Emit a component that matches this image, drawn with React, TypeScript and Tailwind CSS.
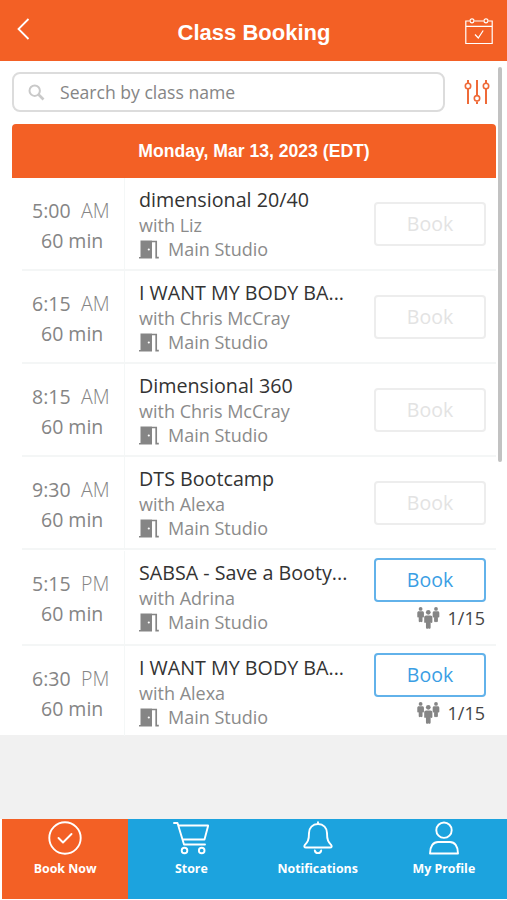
import clsx from "clsx";

interface ClassItem {
	id: number;
	time: string;
	period: "AM" | "PM";
	name: string;
	instructor: string;
	spots?: string;
	rowClass: string;
}

const classes: ClassItem[] = [
	{ id: 1, time: "5:00", period: "AM", name: "dimensional 20/40", instructor: "Liz", rowClass: "h-[93px]" },
	{ id: 2, time: "6:15", period: "AM", name: "I WANT MY BODY BA...", instructor: "Chris McCray", rowClass: "h-[93px]" },
	{ id: 3, time: "8:15", period: "AM", name: "Dimensional 360", instructor: "Chris McCray", rowClass: "h-[93px]" },
	{ id: 4, time: "9:30", period: "AM", name: "DTS Bootcamp", instructor: "Alexa", rowClass: "h-[93px]" },
	{ id: 5, time: "5:15", period: "PM", name: "SABSA - Save a Booty...", instructor: "Adrina", spots: "1/15", rowClass: "h-[96px] pt-px" },
	{ id: 6, time: "6:30", period: "PM", name: "I WANT MY BODY BA...", instructor: "Alexa", spots: "1/15", rowClass: "h-[90px]" },
];

function DoorIcon() {
	return (
		<svg width="20" height="19" viewBox="0 0 20 19" className="shrink-0">
			<path fillRule="evenodd" fill="#858585" d="M1.5 .5H13V18.5H0V17H1.5ZM9.8 8.4a1.1 1.1 0 1 0 0 2.2a1.1 1.1 0 1 0 0-2.2Z" />
			<path fill="none" stroke="#858585" strokeWidth="1.7" d="M13 1.5H17.2V17.6H19.8" />
		</svg>
	);
}

function Person({ x, y }: { x: number; y: number }) {
	return (
		<g transform={`translate(${x} ${y})`}>
			<circle cx="3.5" cy="2" r="2" />
			<path d="M1.8 4.6H5.2C6.4 4.6 7 5.3 7 6.3V10.2C7 11.2 5.7 11.2 5.5 10.4V14.8C5.5 16 4.2 16.3 3.5 15.4C2.8 16.3 1.5 16 1.5 14.8V10.4C1.3 11.2 0 11.2 0 10.2V6.3C0 5.3 .6 4.6 1.8 4.6Z" />
		</g>
	);
}

function PeopleIcon() {
	return (
		<svg width="23" height="22" viewBox="0 0 23 22" fill="#858585">
			<g transform="scale(.95)">
				<Person x={0.3} y={0} />
				<Person x={16.5} y={0} />
			</g>
			<g transform="translate(7.2 3) scale(1.17 1.18)">
				<Person x={0} y={0} />
			</g>
		</svg>
	);
}

function ClassRow({ item }: { item: ClassItem }) {
	return (
		<div className={clsx("ml-[22px] mr-[11px] flex border-b-2 border-[#f4f6f6] last:border-b-0", item.rowClass)}>
			<div className="w-[103px] shrink-0 border-r border-[#f4f7f7] pt-[18px] text-[19.5px] leading-[30px] text-[#858585]">
				<div className="flex pl-[10px]">
					<span className="w-[49px]">{item.time}</span>
					<span className="font-light">{item.period}</span>
				</div>
				<div className="pl-[19px]">60 min</div>
			</div>
			<div className="min-w-0 flex-1 whitespace-nowrap pl-[14px] pt-[9px] text-[#8b8b8b]">
				<h3 className="text-[19.7px] leading-[26px] text-[#333]">{item.name}</h3>
				<p className="text-[18px] leading-[24px]">with {item.instructor}</p>
				<div className="flex items-center text-[18px] leading-[24px]">
					<DoorIcon />
					<span className="pl-[9px]">Main Studio</span>
				</div>
			</div>
			<div className={clsx("mr-[10px] flex w-[112px] shrink-0 flex-col items-end", item.spots ? "pt-[7px]" : "pt-[24px]")}>
				<button
					disabled={!item.spots}
					className={clsx(
						"h-[44px] w-full rounded-[4px] border-2 text-[19.5px] leading-none",
						item.spots ? "border-[#62b2ea] text-[#3a9ee4]" : "border-[#ededed] text-[#e3e3e3]"
					)}
				>
					Book
				</button>
				{item.spots && (
					<div className="flex items-center gap-[8px] pr-px pt-[4px] text-[18px] leading-[24px] text-[#444]">
						<PeopleIcon />
						<span>{item.spots}</span>
					</div>
				)}
			</div>
		</div>
	);
}

const tabs = [
	{
		label: "Book Now",
		active: true,
		icon: (
			<>
				<circle cx="18" cy="18" r="15.7" />
				<path d="M11.5 18L16 22.5L24.5 14" />
			</>
		),
	},
	{
		label: "Store",
		icon: (
			<>
				<path d="M1 3H4.5L11 24.5H32M6 5.5H35.2L31.5 19.5H9.5" />
				<circle cx="11.5" cy="30.5" r="2.8" />
				<circle cx="28.7" cy="30.5" r="2.8" />
			</>
		),
	},
	{
		label: "Notifications",
		icon: (
			<>
				<path d="M18 2.2V4M18 4C12.5 4 9 8 9 13C9 20.5 7.5 22 4.8 25C3.7 26.5 4.4 27.5 6 27.5H30C31.6 27.5 32.3 26.5 31.2 25C28.5 22 27 20.5 27 13C27 8 23.5 4 18 4Z" />
				<path d="M14.8 30.5C15.3 34 20.7 34 21.2 30.5" />
			</>
		),
	},
	{
		label: "My Profile",
		icon: (
			<>
				<circle cx="18" cy="10.2" r="7.7" />
				<path d="M4 33.5C4 26 7.5 22 12 22H24C28.5 22 32 26 32 33.5Z" />
			</>
		),
	},
];

export default function App() {
	return (
		<div className="flex h-[900px] w-[507px] flex-col overflow-hidden bg-[#f1f1f1] font-['Open_Sans',sans-serif]">
			<header className="flex h-[61px] shrink-0 items-center justify-between bg-[#f36025] pl-[17px] pr-[14px] text-white">
				<svg width="26" height="22" viewBox="0 0 26 22" fill="none" stroke="currentColor" strokeWidth="1.8" className="mb-[4px]">
					<path d="M11.5 1L1.5 11L11.5 21" />
				</svg>
				<h1 className="pt-[4px] font-['Liberation_Sans',sans-serif] text-[22px] font-bold leading-none">Class Booking</h1>
				<svg width="28" height="28" viewBox="0 0 28 28" fill="none" stroke="currentColor" strokeWidth="1.2">
					<path d="M4.5 4H.8V26.5H27.2V4H23.5M9.5 4H18.5M.8 9.3H27.2M10 17.5L13.3 21L18.2 13.5" />
					<circle cx="7" cy="3.8" r="2" />
					<circle cx="21" cy="3.8" r="2" />
				</svg>
			</header>

			<main className="relative h-[674px] shrink-0 bg-white pt-[11px]">
				<div className="flex items-center pl-[12px]">
					<div className="flex h-[40px] w-[433px] items-center rounded-[8px] border-2 border-[#dcdcdc] pl-[14px]">
						<svg width="17" height="17" viewBox="0 0 17 17" fill="none" stroke="#c9c9c9" strokeWidth="2">
							<circle cx="6.7" cy="6.7" r="5.2" />
							<path d="M10.5 10.5L15.5 15.5" strokeWidth="2.6" />
						</svg>
						<span className="pl-[15px] text-[17.6px] text-[#858585]">Search by class name</span>
					</div>
					<svg width="26" height="26" viewBox="0 0 26 26" fill="none" stroke="#ef6a38" strokeWidth="2" className="ml-[19px]">
						<path d="M4 1V4M4 10V25M13 1V16.5M13 22.5V25M22 1V4M22 10V25" />
						<circle cx="4" cy="7" r="2.7" strokeWidth="1.6" />
						<circle cx="13" cy="19.3" r="2.7" strokeWidth="1.6" />
						<circle cx="22" cy="7" r="2.7" strokeWidth="1.6" />
					</svg>
				</div>
				<div className="ml-[12px] mr-[11px] mt-[12px] flex h-[54px] items-center justify-center rounded-t-[4px] bg-[#f36025] pt-px font-['Liberation_Sans',sans-serif] text-[17.6px] font-bold text-white">
					Monday, Mar 13, 2023 (EDT)
				</div>
				<div>
					{classes.map((item) => (
						<ClassRow key={item.id} item={item} />
					))}
				</div>
				{/* scrollbar */}
				<div className="absolute right-[5px] top-[6px] h-[395px] w-[4px] rounded-full bg-[#c2c2c2]" />
			</main>

			<nav className="mt-auto flex h-[81px] shrink-0 border-b border-l-2 border-white text-white">
				{tabs.map((tab) => (
					<button
						key={tab.label}
						className={clsx("flex flex-1 flex-col items-center", tab.active ? "bg-[#f36025]" : "bg-[#1ca3de]")}
					>
						<svg width="36" height="36" viewBox="0 0 36 36" fill="none" stroke="currentColor" strokeWidth="1.9" strokeLinecap="round" strokeLinejoin="round" className="mt-px">
							{tab.icon}
						</svg>
						<span className="mt-[4px] text-[12.4px] font-bold leading-[18px]">{tab.label}</span>
					</button>
				))}
			</nav>
		</div>
	);
}
